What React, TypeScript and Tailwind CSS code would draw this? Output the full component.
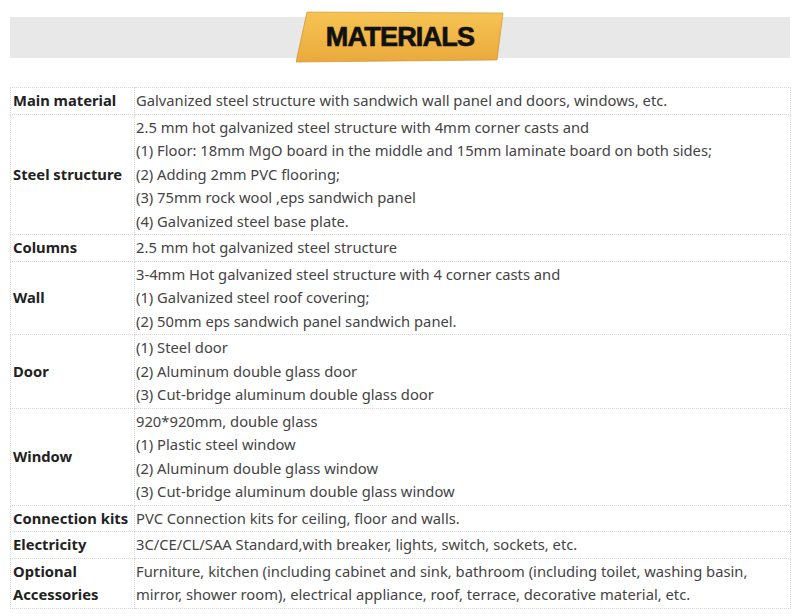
const rows: { label: string[]; lines: string[] }[] = [
  { label: ["Main material"], lines: ["Galvanized steel structure with sandwich wall panel and doors, windows, etc."] },
  {
    label: ["Steel structure"],
    lines: [
      "2.5 mm hot galvanized steel structure with 4mm corner casts and",
      "(1) Floor: 18mm MgO board in the middle and 15mm laminate board on both sides;",
      "(2) Adding 2mm PVC flooring;",
      "(3) 75mm rock wool ,eps sandwich panel",
      "(4) Galvanized steel base plate.",
    ],
  },
  { label: ["Columns"], lines: ["2.5 mm hot galvanized steel structure"] },
  {
    label: ["Wall"],
    lines: [
      "3-4mm Hot galvanized steel structure with 4 corner casts and",
      "(1) Galvanized steel roof covering;",
      "(2) 50mm eps sandwich panel sandwich panel.",
    ],
  },
  {
    label: ["Door"],
    lines: ["(1) Steel door", "(2) Aluminum double glass door", "(3) Cut-bridge aluminum double glass door"],
  },
  {
    label: ["Window"],
    lines: [
      "920*920mm, double glass",
      "(1) Plastic steel window",
      "(2) Aluminum double glass window",
      "(3) Cut-bridge aluminum double glass window",
    ],
  },
  { label: ["Connection kits"], lines: ["PVC Connection kits for ceiling, floor and walls."] },
  { label: ["Electricity"], lines: ["3C/CE/CL/SAA Standard,with breaker, lights, switch, sockets, etc."] },
  {
    label: ["Optional", "Accessories"],
    lines: [
      "Furniture, kitchen (including cabinet and sink, bathroom (including toilet, washing basin,",
      "mirror, shower room), electrical appliance, roof, terrace, decorative material, etc.",
    ],
  },
];

// Gold ribbon with the section title over the grey band.
function Banner() {
  return (
    <div className="relative -my-[6px] h-[52px] w-[208px]">
      <svg className="absolute inset-0" width="208" height="52" viewBox="0 0 208 52">
        <defs>
          <linearGradient id="gold" x1="0" y1="0" x2="0" y2="1">
            <stop offset="0" stopColor="#f6c452" />
            <stop offset="1" stopColor="#eaa93c" />
          </linearGradient>
        </defs>
        <polygon points="11,1 207,2 201,49 0,51" fill="url(#gold)" stroke="#c98a26" strokeWidth="0.6" />
      </svg>
      <div className="relative flex h-full items-center justify-center pt-[1px] font-['Liberation_Sans',Arial,sans-serif] text-[27px] font-bold tracking-[-0.8px] text-[#111] [-webkit-text-stroke:0.7px_#111]">
        MATERIALS
      </div>
    </div>
  );
}

export default function App() {
  return (
    <div className="h-[616px] w-[800px] bg-white pt-[17px] font-['Noto_Sans',Arial,sans-serif]">
      <div className="mx-[10px] flex h-[41px] justify-center bg-[#e8e8e8]">
        <Banner />
      </div>
      <table className="ml-[10px] mt-[29px] w-[781px] border-collapse text-[14.75px] leading-[23.5px]">
        <tbody>
          {rows.map((r) => (
            <tr key={r.label.join(" ")}>
              <td className="w-[124px] border border-dotted border-[#d6d6d6] px-[2px] py-[1px] align-middle font-bold text-[#222]">
                {r.label.map((l) => (
                  <div key={l} className="whitespace-nowrap">{l}</div>
                ))}
              </td>
              <td className="border border-dotted border-[#d6d6d6] py-[1px] pl-[1px] pr-[2px] text-[#444]">
                {r.lines.map((l) => (
                  <div key={l} className="whitespace-nowrap">{l}</div>
                ))}
              </td>
            </tr>
          ))}
        </tbody>
      </table>
    </div>
  );
}
